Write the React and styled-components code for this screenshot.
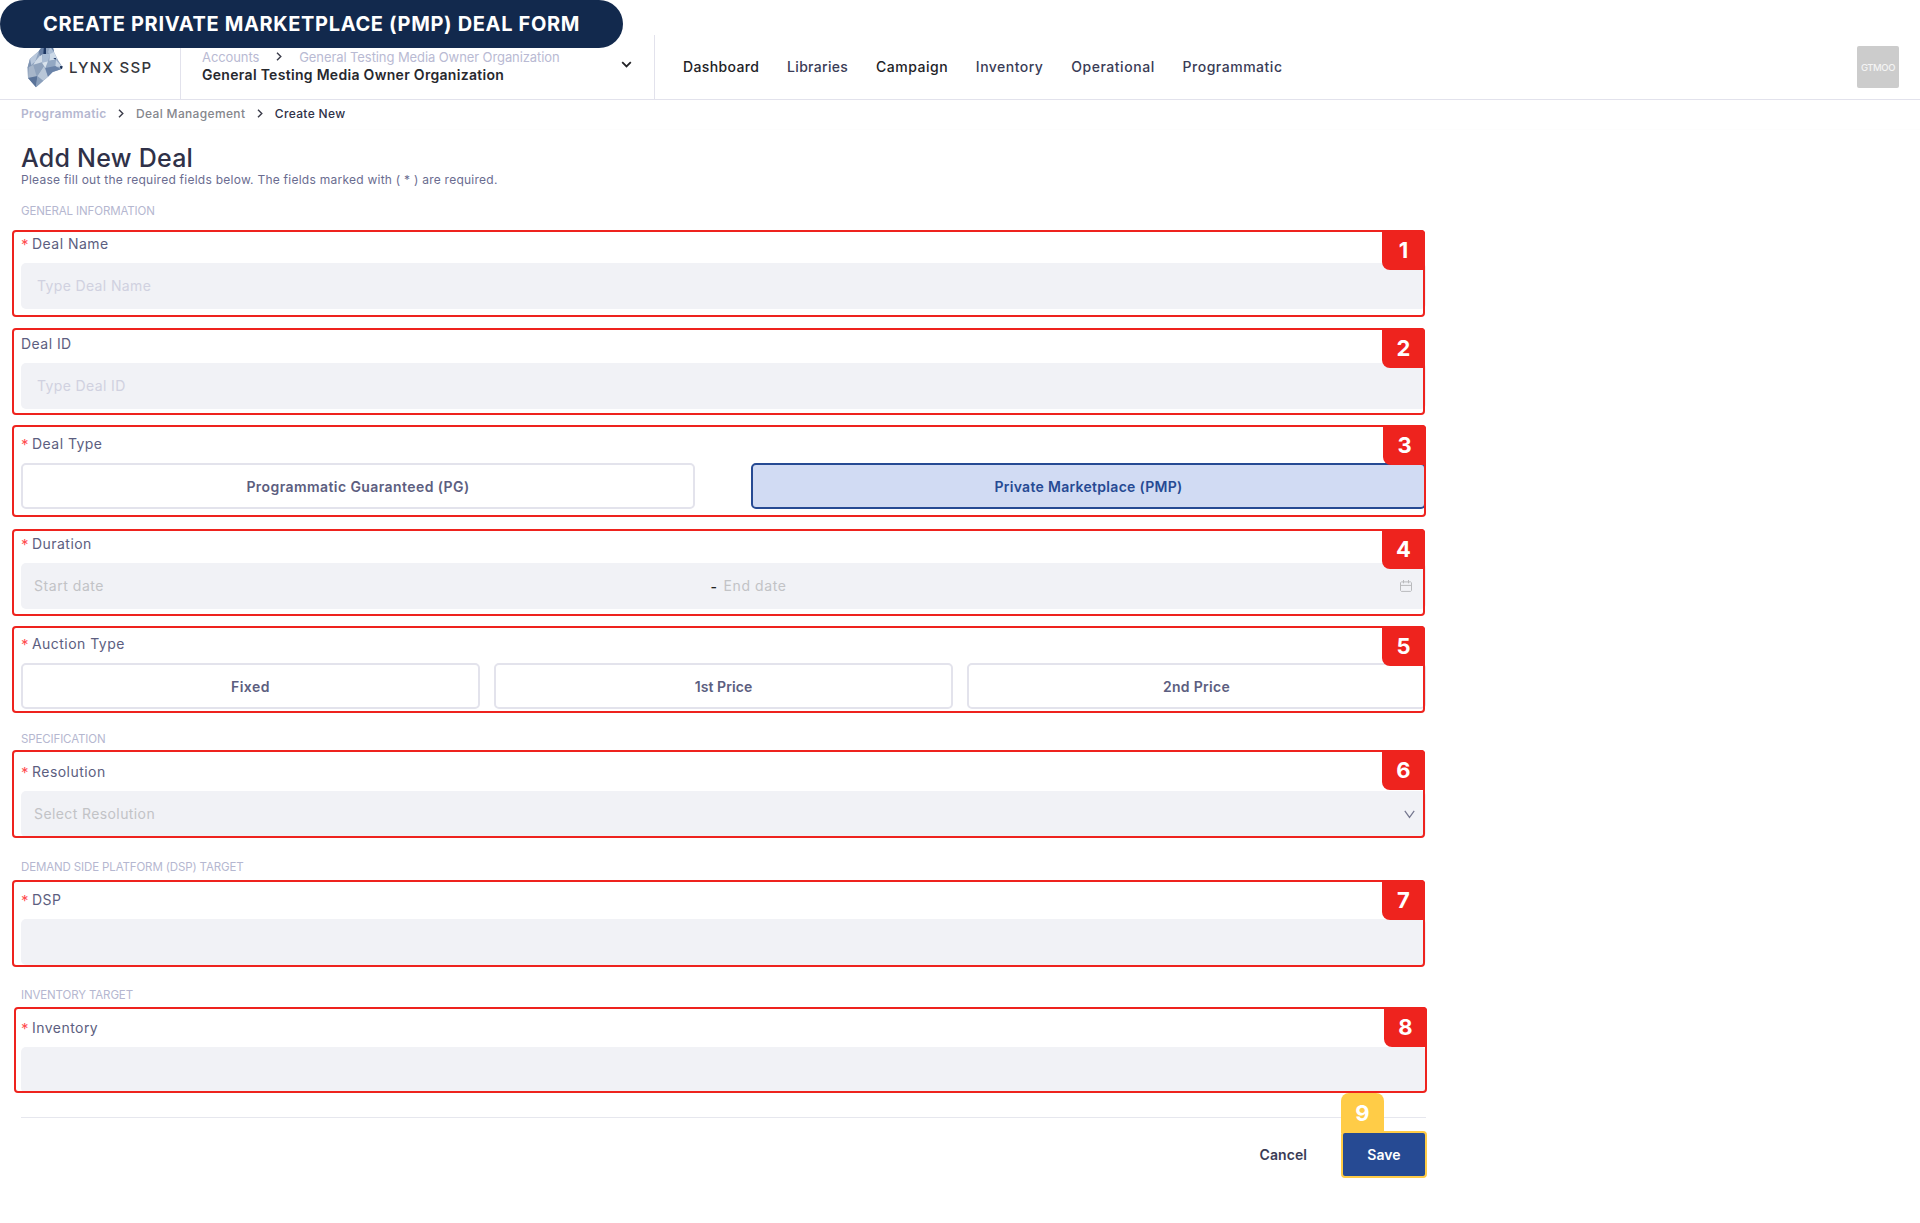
import React from 'react';
import styled, { createGlobalStyle } from 'styled-components';

const GlobalStyle = createGlobalStyle`
  *, *::before, *::after { box-sizing: border-box; }
  body {
    margin: 0;
    background: #fff;
    font-family: Inter, "Liberation Sans", sans-serif;
    font-size: 14px;
    color: #2f3148;
  }
  button, input { font: inherit; }
`;

const Page = styled.div`
  position: relative;
  min-height: 1223px;
  padding-top: 35px;
  overflow: hidden;
`;

const Banner = styled.div`
  position: absolute;
  z-index: 5;
  top: 0;
  left: 0;
  width: 623px;
  height: 48px;
  border-radius: 24px;
  background: #12294d;
  color: #fff;
  display: flex;
  align-items: center;
  justify-content: center;
  font-size: 20px;
  font-weight: 700;
  letter-spacing: 0.65px;
  white-space: nowrap;
`;

const Header = styled.header`
  display: flex;
  height: 65px;
  border-bottom: 1px solid #e2e2ec;
`;

const Brand = styled.div`
  display: flex;
  align-items: center;
  width: 181px;
  padding-left: 27px;
  border-right: 1px solid #e2e2ec;
`;

const BrandMark = styled.svg`
  width: 36px;
  height: 45px;
  margin: -3px 6px 0 0;
`;

const BrandName = styled.span`
  font-size: 15px;
  font-weight: 500;
  line-height: 18px;
  letter-spacing: 1.3px;
  color: #35363b;
  padding-top: 2px;
  white-space: nowrap;
`;

const Account = styled.div`
  display: flex;
  align-items: center;
  justify-content: space-between;
  width: 474px;
  padding: 0 22px 2px 21px;
  border-right: 1px solid #e2e2ec;

  > svg { margin-bottom: 3px; }
`;

const AccountPath = styled.div`
  display: flex;
  align-items: center;
  height: 18px;
  font-size: 13px;
  letter-spacing: -0.09px;
  color: #b9bad3;
  white-space: nowrap;

  svg { margin: -2px 17px 0 17px; }
`;

const AccountName = styled.div`
  line-height: 18px;
  font-weight: 600;
  letter-spacing: 0.3px;
  color: #27282e;
  white-space: nowrap;
`;

const Nav = styled.nav`
  display: flex;
  align-items: center;
  gap: 27.8px;
  padding: 0 0 1px 28px;
`;

const NavLink = styled.a`
  font-weight: 500;
  letter-spacing: ${(p) => p.$spacing}px;
  color: ${(p) => (p.$dark ? '#222226' : '#3a3c56')};
`;

const Avatar = styled.div`
  display: flex;
  align-items: center;
  justify-content: center;
  width: 42px;
  height: 42px;
  margin: 11px 21px 0 auto;
  border-radius: 2px;
  background: #ccc;
  color: #f4f4f4;
  font-size: 9.5px;
  font-weight: 500;
  letter-spacing: -0.45px;
`;

const Breadcrumb = styled.div`
  display: flex;
  align-items: center;
  height: 30px;
  padding: 0 21px 2px;
  border-bottom: 1px solid #fdfdfd;
  font-size: 12px;
  letter-spacing: 0.34px;

  svg { margin: 0 12px 0 11.5px; }
`;

const Crumb = styled.span`
  font-weight: ${(p) => p.$weight || 500};
  color: ${(p) => p.$color};
`;

const Main = styled.main`
  width: 1426px;
  padding: 14px 0 0 21px;
`;

const Title = styled.h1`
  margin: 0;
  font-size: 25px;
  font-weight: 500;
  line-height: 29px;
  letter-spacing: 0.25px;
  color: #2f3148;
`;

const Subtitle = styled.p`
  margin: 0 0 17px;
  font-size: 12px;
  line-height: 14px;
  letter-spacing: 0.25px;
  color: #6a6c90;
`;

const SectionTitle = styled.h2`
  margin: ${(p) => (p.$first ? 0 : 23)}px 0 12px;
  font-size: 11.5px;
  font-weight: 400;
  line-height: 14px;
  letter-spacing: -0.13px;
  color: #b5b7d0;
`;

const Item = styled.section`
  position: relative;
  height: 79px;
  margin-bottom: 21px;
`;

const Label = styled.label`
  display: flex;
  height: 33px;
  line-height: 28px;
  letter-spacing: 0.46px;
  color: #5c5e80;
`;

const Star = styled.span`
  width: 11px;
  padding-top: 1px;
  font-size: 15px;
  color: #ff4d4f;
`;

const Control = styled.div`
  display: flex;
  align-items: center;
  height: 46px;
  padding: 0 ${(p) => p.$end || 12}px 0 ${(p) => p.$start || 12}px;
  border-radius: 5px;
  background: #f1f2f6;
`;

const Input = styled.input`
  flex: 1;
  min-width: 0;
  padding: 0 0 1px;
  border: 0;
  outline: 0;
  background: transparent;
  letter-spacing: ${(p) => p.$spacing}px;

  &::placeholder { color: ${(p) => p.$tone || '#c2c3c6'}; opacity: 1; }
`;

const Dash = styled.span`
  width: 13px;
  color: #222;
  font-weight: 500;
`;

const Options = styled.div`
  display: flex;
  gap: ${(p) => p.$gap}px;
`;

const Option = styled.button`
  flex: ${(p) => p.$grow || 1} 1 0;
  height: 46px;
  padding: 0;
  border: 2px solid ${(p) => (p.$active ? '#264a93' : '#e3e3ec')};
  border-radius: 5px;
  background: ${(p) => (p.$active ? '#d1dbf3' : '#fff')};
  color: ${(p) => (p.$active ? '#264a93' : '#5c5e80')};
  font-weight: 600;
  letter-spacing: ${(p) => p.$spacing}px;
`;

const Outline = styled.div`
  position: absolute;
  top: ${(p) => p.$top}px;
  left: ${(p) => -9 + p.$shift}px;
  width: ${(p) => p.$width}px;
  height: ${(p) => p.$height}px;
  border: 2px solid #ee231e;
  border-radius: 4px;
  pointer-events: none;
`;

const Badge = styled.span`
  position: absolute;
  top: -2px;
  right: -2px;
  display: flex;
  align-items: center;
  justify-content: center;
  width: 43px;
  height: 40px;
  border-radius: 0 4px 0 8px;
  background: #ee231e;
  color: #fff;
  font-size: 22px;
  font-weight: 700;
`;

const SaveBadge = styled(Badge)`
  top: -40px;
  left: -2px;
  right: auto;
  border-radius: 8px 8px 0 0;
  background: #ffcc47;
`;

const Footer = styled.footer`
  display: flex;
  align-items: center;
  justify-content: flex-end;
  margin-top: 24px;
  padding-top: 14px;
  border-top: 1px solid #e6e7ee;
`;

const Cancel = styled.button`
  padding: 0;
  margin-right: 35px;
  border: 0;
  background: none;
  color: #3a3c56;
  font-weight: 600;
  letter-spacing: 0.08px;
`;

const SaveWrap = styled.div`
  position: relative;
`;

const Save = styled.button`
  display: block;
  width: 84px;
  height: 45px;
  padding: 0;
  border: 0;
  border-radius: 4px;
  background: #264a93;
  color: #fff;
  font-weight: 600;
  letter-spacing: 0.08px;
`;

const SaveOutline = styled.div`
  position: absolute;
  inset: -1px;
  border: 2px solid #ffcc47;
  border-radius: 4px;
  pointer-events: none;
`;

const LynxLogo = () => (
  <BrandMark viewBox="15 -3 108 135" aria-hidden="true">
    <polygon points="50,22 68,-3 76,10 90,-2 96,24 108,48 121,68 118,76 92,84 78,98 64,110 42,130 18,102 17,70 24,44" fill="#8fa3bf" />
    <polygon points="50,22 24,44 20,70 40,52" fill="#b9c8dc" />
    <polygon points="24,44 17,70 18,102 30,74" fill="#7f94b2" />
    <polygon points="20,70 18,102 44,98 34,62" fill="#a7b6ca" />
    <polygon points="18,102 42,130 46,96" fill="#5a7399" />
    <polygon points="42,130 46,96 64,110" fill="#8a9fbb" />
    <polygon points="46,96 64,110 78,98 66,66" fill="#b9c7d8" />
    <polygon points="34,62 46,96 66,66 54,44" fill="#8fa2bc" />
    <polygon points="40,52 60,28 62,54 34,62" fill="#cfdae7" />
    <polygon points="50,22 68,-3 66,28 54,36" fill="#6880a5" />
    <polygon points="66,4 72,12 72,34 64,30" fill="#1d3763" />
    <polygon points="78,24 90,-2 96,24 84,34" fill="#a9bcd4" />
    <polygon points="86,10 90,-2 96,24" fill="#5f799f" />
    <polygon points="62,30 84,30 78,52 60,56" fill="#a9bcd4" />
    <polygon points="84,30 96,24 106,46 82,50" fill="#cddae8" />
    <polygon points="78,52 106,46 100,66 70,72" fill="#93a8c3" />
    <polygon points="102,48 121,68 100,68" fill="#c6d3e3" />
    <polygon points="70,72 100,66 116,76 92,84 78,98" fill="#6a83a8" />
    <polygon points="60,56 78,52 70,72" fill="#d9e3ed" />
    <polygon points="94,42 103,42 100,47" fill="#1d3763" />
    <polygon points="114,66 122,67 120,75 115,73" fill="#142b52" />
  </BrandMark>
);

const Chevron = ({ width = 6, height = 9, color = '#3b3c4a' }) => (
  <svg width={width} height={height} viewBox="0 0 6 9" fill="none" stroke={color} strokeWidth="1.4">
    <path d="M1 0.7 4.8 4.5 1 8.3" />
  </svg>
);

const CaretDown = () => (
  <svg width="11" height="7" viewBox="0 0 11 7" fill="none" stroke="#222226" strokeWidth="1.8">
    <path d="M1.2 1.2 5.5 5.4 9.8 1.2" />
  </svg>
);

const SelectArrow = () => (
  <svg width="11" height="9" viewBox="0 0 11 9" fill="none" stroke="#75778f" strokeWidth="1.2">
    <path d="M0.8 0.8 5.5 7.4 10.2 0.8" />
  </svg>
);

const CalendarIcon = () => (
  <svg width="12" height="12" viewBox="0 0 12 12" fill="none" stroke="#b9babd" strokeWidth="1">
    <path d="M1.3 1.9h9.4l0.8 0.8v7.9l-0.8 0.8h-9.4l-0.8-0.8v-7.9zM0.5 5.4h11M3.5 0v3.3M8.5 0v3.3" />
  </svg>
);

const Field = ({ label, required, number, top, height = 87, width = 1413, shift = 0, children }) => (
  <Item>
    <Label>
      {required && <Star>*</Star>}
      {label}
    </Label>
    {children}
    <Outline $top={top} $height={height} $width={width} $shift={shift}>
      <Badge>{number}</Badge>
    </Outline>
  </Item>
);

const links = [
  { name: 'Dashboard', spacing: 0.36, dark: true },
  { name: 'Libraries', spacing: 0.32 },
  { name: 'Campaign', spacing: 0.5, dark: true },
  { name: 'Inventory', spacing: 0.48 },
  { name: 'Operational', spacing: 0.54 },
  { name: 'Programmatic', spacing: 0.52 },
];

export default function App() {
  return (
    <Page>
      <GlobalStyle />
      <Banner>CREATE PRIVATE MARKETPLACE (PMP) DEAL FORM</Banner>

      <Header>
        <Brand>
          <LynxLogo />
          <BrandName>LYNX SSP</BrandName>
        </Brand>
        <Account>
          <div>
            <AccountPath>
              Accounts
              <Chevron />
              General Testing Media Owner Organization
            </AccountPath>
            <AccountName>General Testing Media Owner Organization</AccountName>
          </div>
          <CaretDown />
        </Account>
        <Nav>
          {links.map((l) => (
            <NavLink key={l.name} $spacing={l.spacing} $dark={l.dark}>{l.name}</NavLink>
          ))}
        </Nav>
        <Avatar>GTMOO</Avatar>
      </Header>

      <Breadcrumb>
        <Crumb $color="#b5b7d0" $weight={600}>Programmatic</Crumb>
        <Chevron />
        <Crumb $color="#85868c">Deal Management</Crumb>
        <Chevron />
        <Crumb $color="#2f3148">Create New</Crumb>
      </Breadcrumb>

      <Main>
        <Title>Add New Deal</Title>
        <Subtitle>Please fill out the required fields below. The fields marked with ( * ) are required.</Subtitle>

        <SectionTitle $first>GENERAL INFORMATION</SectionTitle>
        <Field label="Deal Name" required number={1} top={0}>
          <Control $start={16}>
            <Input placeholder="Type Deal Name" $spacing={0.36} $tone="#d0d1e0" />
          </Control>
        </Field>
        <Field label="Deal ID" number={2} top={-2}>
          <Control $start={16}>
            <Input placeholder="Type Deal ID" $spacing={0.38} $tone="#d0d1e0" />
          </Control>
        </Field>
        <Field label="Deal Type" required number={3} top={-5} height={92} width={1414}>
          <Options $gap={56}>
            <Option $grow={674} $spacing={0.42}>Programmatic Guaranteed (PG)</Option>
            <Option $grow={675} $spacing={0.3} $active>Private Marketplace (PMP)</Option>
          </Options>
        </Field>
        <Field label="Duration" required number={4} top={-1}>
          <Control $start={13} $end={14}>
            <Input placeholder="Start date" $spacing={0.55} />
            <Dash>-</Dash>
            <Input placeholder="End date" $spacing={0.6} />
            <CalendarIcon />
          </Control>
        </Field>
        <Field label="Auction Type" required number={5} top={-4}>
          <Options $gap={14}>
            <Option $spacing={0.48}>Fixed</Option>
            <Option $spacing={0.07}>1st Price</Option>
            <Option $spacing={0.29}>2nd Price</Option>
          </Options>
        </Field>

        <SectionTitle>SPECIFICATION</SectionTitle>
        <Field label="Resolution" required number={6} top={-8} height={88}>
          <Control $start={13} $end={11}>
            <Input placeholder="Select Resolution" $spacing={0.4} />
            <SelectArrow />
          </Control>
        </Field>

        <SectionTitle>DEMAND SIDE PLATFORM (DSP) TARGET</SectionTitle>
        <Field label="DSP" required number={7} top={-6}>
          <Control />
        </Field>

        <SectionTitle>INVENTORY TARGET</SectionTitle>
        <Field label="Inventory" required number={8} top={-7} height={86} shift={2}>
          <Control />
        </Field>

        <Footer>
          <Cancel>Cancel</Cancel>
          <SaveWrap>
            <Save>Save</Save>
            <SaveOutline>
              <SaveBadge>9</SaveBadge>
            </SaveOutline>
          </SaveWrap>
        </Footer>
      </Main>
    </Page>
  );
}
